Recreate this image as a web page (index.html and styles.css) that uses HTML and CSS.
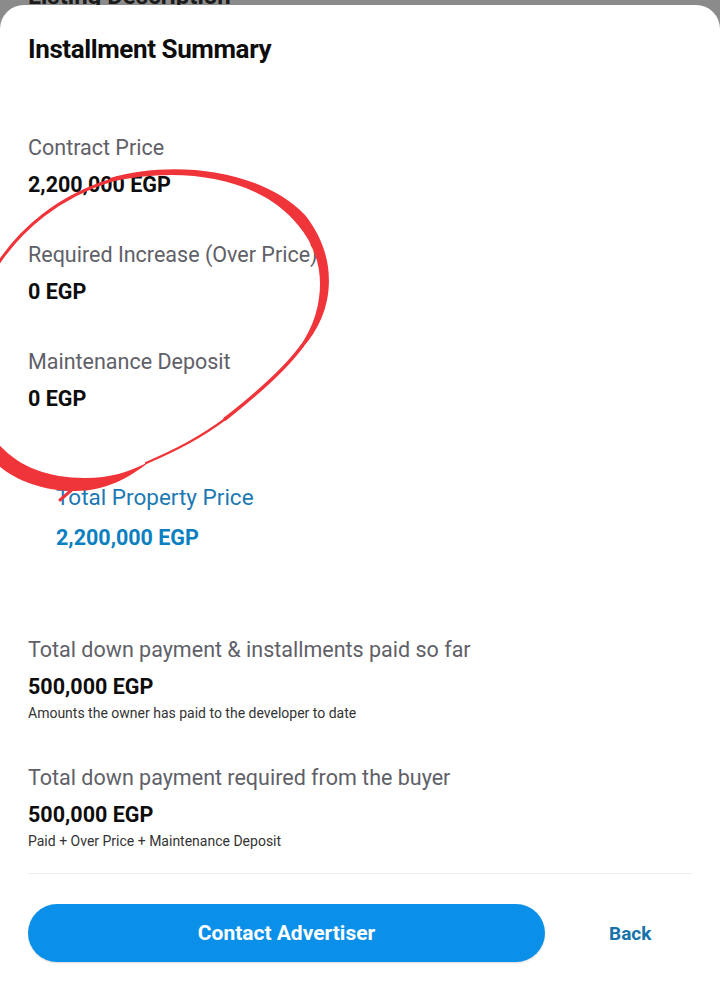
FILE: index.html
```html
<!DOCTYPE html>
<html lang="en">
<head>
<meta charset="utf-8">
<title>Installment Summary</title>
<link rel="stylesheet" href="styles.css">
</head>
<body>
<div class="screen">
  <div class="backdrop"><span class="backdrop-title">Listing Description</span></div>
  <section class="sheet">
    <h1 class="sheet-title">Installment Summary</h1>

    <div class="items first">
      <div class="item">
        <div class="label">Contract Price</div>
        <div class="value">2,200,000 EGP</div>
      </div>
      <div class="item">
        <div class="label">Required Increase (Over Price)</div>
        <div class="value">0 EGP</div>
      </div>
      <div class="item">
        <div class="label">Maintenance Deposit</div>
        <div class="value">0 EGP</div>
      </div>
    </div>

    <div class="item total">
      <div class="label">Total Property Price</div>
      <div class="value">2,200,000 EGP</div>
    </div>

    <div class="items paid">
      <div class="item">
        <div class="label">Total down payment &amp; installments paid so far</div>
        <div class="value">500,000 EGP</div>
        <div class="note">Amounts the owner has paid to the developer to date</div>
      </div>
      <div class="item">
        <div class="label">Total down payment required from the buyer</div>
        <div class="value">500,000 EGP</div>
        <div class="note">Paid + Over Price + Maintenance Deposit</div>
      </div>
    </div>

    <div class="divider"></div>

    <div class="actions">
      <button class="btn-primary">Contact Advertiser</button>
      <button class="btn-link">Back</button>
    </div>
  </section>

  <svg class="scribble" width="720" height="989" viewBox="0 0 720 989" aria-hidden="true">
    <g fill="#f0353a">
      <path d="M 110 178 C 170 160, 260 168, 305 215 C 325 240, 333 270, 327 300 C 322 325, 308 345, 288 362 C 305 342, 316 322, 319 298 C 323 270, 315 245, 298 225 C 258 176, 180 166, 110 182 Z"/>
      <path d="M -5 440 C 15 465, 45 478, 85 478 C 110 478, 130 472, 150 461 C 130 478, 105 491, 75 491 C 40 491, 10 478, -5 462 Z"/>
    </g>
    <g fill="none" stroke="#f0353a" stroke-linecap="round" stroke-linejoin="round">
      <path d="M -6 270 C 20 228, 60 196, 112 180" stroke-width="3"/>
      <path d="M 302 346 C 286 368, 262 390, 225 419" stroke-width="3.5"/>
      <path d="M 228 417 C 200 438, 176 450, 146 463" stroke-width="2.2"/>
      <path d="M 74 488 L 60 500" stroke-width="3"/>
    </g>
  </svg>
</div>
</body>
</html>
```
FILE: styles.css
```css
* { box-sizing: border-box; }
html, body { margin: 0; padding: 0; }
body {
  background: #8b8b8b;
  font-family: Roboto, "Noto Sans", "Liberation Sans", sans-serif;
  color: #111;
}
.screen {
  position: relative;
  width: 720px;
  height: 989px;
  overflow: hidden;
}
.backdrop {
  height: 5px;
  overflow: hidden;
  display: flex;
  align-items: flex-end;
  padding-left: 28px;
}
.backdrop-title {
  font-size: 24px;
  font-weight: 700;
  line-height: 24px;
  margin-bottom: -3px;
  color: #1c1c1c;
  white-space: nowrap;
  flex: none;
}
.sheet {
  background: #fff;
  border-radius: 24px 24px 0 0;
  height: 984px;
  padding: 29px 28px 0 28px;
  display: flex;
  flex-direction: column;
}
.sheet-title {
  margin: 0;
  font-size: 26px;
  line-height: 30px;
  font-weight: 700;
  color: #0d0d0d;
  font-stretch: 88%;
  letter-spacing: -0.4px;
}
.items { display: flex; flex-direction: column; gap: 45px; }
.items.first { margin-top: 72px; }
.item { display: flex; flex-direction: column; }
.label {
  font-size: 21.5px;
  line-height: 24px;
  font-weight: 400;
  color: #606068;
}
.value {
  margin-top: 12px;
  font-size: 21.5px;
  line-height: 26px;
  font-weight: 700;
  color: #0d0d0d;
}
.note {
  margin-top: 5px;
  font-size: 14px;
  line-height: 16px;
  color: #333;
}
.item.total { margin-top: 73px; padding-left: 28px; }
.item.total .label { color: #1d79b3; font-size: 22.5px; }
.item.total .value { color: #0b80c1; margin-top: 16px; }
.items.paid { margin-top: 87px; }
.divider {
  margin-top: 24px;
  height: 1px;
  background: #efeff1;
}
.actions {
  margin-top: 30px;
  display: flex;
  align-items: center;
}
.btn-primary {
  width: 517px;
  height: 58px;
  border: 0;
  border-radius: 29px;
  background: #0a90e8;
  color: #fff;
  font-family: inherit;
  font-size: 21px;
  font-weight: 700;
  font-stretch: 88%;
  box-shadow: 0 1px 2px rgba(0,0,0,0.15);
}
.btn-link {
  margin-left: 64px;
  border: 0;
  background: none;
  padding: 0;
  color: #1572aa;
  font-family: inherit;
  font-size: 19px;
  font-weight: 700;
  font-stretch: 88%;
}
.scribble {
  position: absolute;
  top: 0;
  left: 0;
  pointer-events: none;
}
```
